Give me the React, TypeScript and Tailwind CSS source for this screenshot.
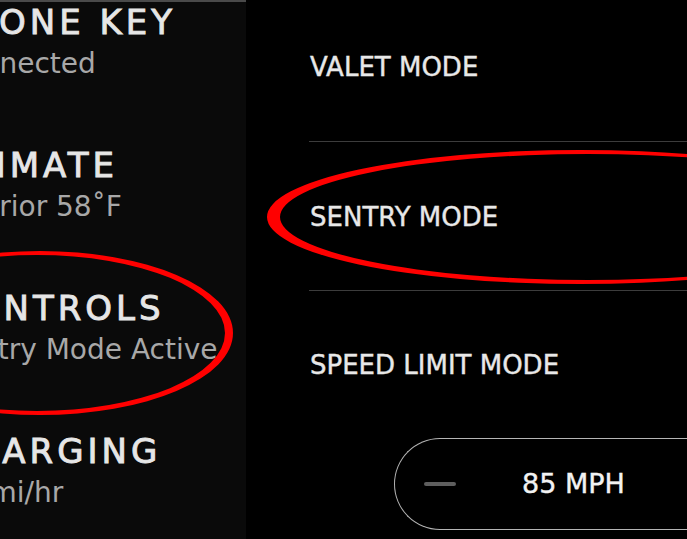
const items = [
  { title: 'PHONE KEY', sub: 'Connected' },
  { title: 'CLIMATE', sub: 'Interior 58˚F' },
  { title: 'CONTROLS', sub: 'Sentry Mode Active' },
  { title: 'CHARGING', sub: '32 mi/hr' },
]

function Annotations() {
  // hand-drawn style red rings, outer minus inner ellipse
  const ring = (cx: number, cy: number, rx: number, ry: number, icx: number, icy: number, irx: number, iry: number) =>
    `M ${cx - rx} ${cy} a ${rx} ${ry} 0 1 0 ${rx * 2} 0 a ${rx} ${ry} 0 1 0 ${-rx * 2} 0 Z ` +
    `M ${icx - irx} ${icy} a ${irx} ${iry} 0 1 0 ${irx * 2} 0 a ${irx} ${iry} 0 1 0 ${-irx * 2} 0 Z`

  return (
    <svg className="pointer-events-none absolute inset-0" width="687" height="539" viewBox="0 0 687 539">
      <path fillRule="evenodd" fill="#ff0000" d={ring(40, 333, 193, 82, 37, 333, 188, 78)} />
      <path fillRule="evenodd" fill="#ff0000" d={ring(580, 217, 313, 67, 588, 217, 308, 63)} />
    </svg>
  )
}

export default function App() {
  return (
    <div
      className="relative flex h-[539px] w-full overflow-hidden bg-black"
      style={{ fontFamily: '"DejaVu Sans", sans-serif' }}
    >
      <div className="w-[246px] shrink-0 overflow-hidden border-t-2 border-[#4a4a4a] bg-[#0a0a0a]">
        <div className="ml-[-55px] flex flex-col gap-[63px]">
          {items.map((it) => (
            <div key={it.title} className="flex flex-col gap-1 whitespace-nowrap">
              <div className="text-[34px] leading-[40px] tracking-[4px] text-[#e6e6e6] [-webkit-text-stroke:0.9px_#e6e6e6]">
                {it.title}
              </div>
              <div className="text-[28px] leading-[36px] text-[#a8a8a8]">{it.sub}</div>
            </div>
          ))}
        </div>
      </div>

      <div className="flex min-w-0 flex-1 flex-col pl-[63px]">
        <div className="border-b border-[#3c3c3c] pt-[52px] pb-[59px]">
          <div className="pl-px text-[26px] leading-[30px] whitespace-nowrap text-[#e8e8e8] [-webkit-text-stroke:0.4px_#e8e8e8]">
            VALET MODE
          </div>
        </div>
        <div className="border-b border-[#3c3c3c] pt-[60px] pb-[58px]">
          <div className="pl-px text-[26px] leading-[30px] whitespace-nowrap text-[#e8e8e8] [-webkit-text-stroke:0.4px_#e8e8e8]">
            SENTRY MODE
          </div>
        </div>
        <div className="pt-[59px]">
          <div className="pl-px text-[26px] leading-[30px] whitespace-nowrap text-[#e8e8e8] [-webkit-text-stroke:0.4px_#e8e8e8]">
            SPEED LIMIT MODE
          </div>
          <div className="mt-[58px] ml-[85px] flex h-[92px] w-[420px] items-center rounded-l-[46px] border-[1.5px] border-r-0 border-[#b5b5b5]">
            <div className="ml-[29px] h-1 w-8 rounded-full bg-[#5e5e5e]" />
            <div className="ml-[66px] text-[27px] whitespace-nowrap text-[#f2f2f2] [-webkit-text-stroke:0.4px_#f2f2f2]">
              85 MPH
            </div>
          </div>
        </div>
      </div>

      <Annotations />
    </div>
  )
}
